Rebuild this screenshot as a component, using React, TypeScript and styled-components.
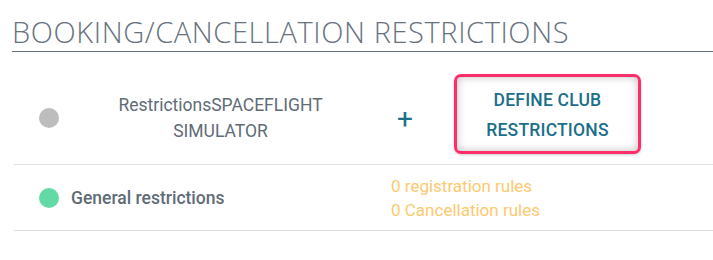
import styled, { createGlobalStyle } from 'styled-components';

const GlobalStyle = createGlobalStyle`
  body {
    margin: 0;
    background: #fff;
    font-family: Roboto, "Liberation Sans", sans-serif;
  }
`;

type Rule = {
  color: string;
  name: string;
  centered?: boolean;
  bold?: boolean;
  registration?: number;
  cancellation?: number;
  define?: boolean;
};

const rules: Rule[] = [
  { color: '#bdbdbd', name: 'RestrictionsSPACEFLIGHT SIMULATOR', centered: true, define: true },
  { color: '#63d9a6', name: 'General restrictions', bold: true, registration: 0, cancellation: 0 }
];

export default function App(): JSX.Element {
  return (
    <Page>
      <GlobalStyle />
      <Title>BOOKING/CANCELLATION RESTRICTIONS</Title>
      <Table>
        {rules.map((rule) => (
          <Row key={rule.name} tall={rule.define}>
            <Dot color={rule.color} />
            <Name centered={rule.centered} bold={rule.bold}>
              {rule.name}
            </Name>
            {rule.define ? (
              <Actions>
                <Plus>+</Plus>
                <DefineButton>DEFINE CLUB RESTRICTIONS</DefineButton>
              </Actions>
            ) : (
              <Counts>
                <span>{rule.registration} registration rules</span>
                <span>{rule.cancellation} Cancellation rules</span>
              </Counts>
            )}
          </Row>
        ))}
      </Table>
    </Page>
  );
}

const Page = styled.div`
  width: 713px;
  height: 260px;
  padding-top: 15px;
  box-sizing: border-box;
  overflow: hidden;
`;

const Title = styled.h2`
  margin: 0 0 0 12px;
  padding-bottom: 3px;
  font-family: "Open Sans", sans-serif;
  font-weight: 300;
  font-size: 29px;
  line-height: 33px;
  letter-spacing: 0.6px;
  white-space: nowrap;
  color: #67727e;
  border-bottom: 1px solid #67727e;
`;

const Table = styled.div`
  margin: 0 0 0 14px;
`;

const Row = styled.div<{ tall?: boolean }>`
  display: flex;
  align-items: center;
  box-sizing: border-box;
  height: ${(p) => (p.tall ? '113px' : '66px')};
  padding-top: ${(p) => (p.tall ? '20px' : '0')};
  border-bottom: 1px solid #dedede;
`;

const Dot = styled.span<{ color: string }>`
  flex: none;
  width: 20px;
  height: 20px;
  margin: 0 12px 0 25px;
  border-radius: 50%;
  background: ${(p) => p.color};
`;

const Name = styled.div<{ centered?: boolean; bold?: boolean }>`
  width: 299px;
  flex: none;
  text-align: ${(p) => (p.centered ? 'center' : 'left')};
  padding: ${(p) => (p.centered ? '0 30px' : '0')};
  box-sizing: border-box;
  font-size: 17.5px;
  font-weight: ${(p) => (p.bold ? 500 : 400)};
  line-height: 26px;
  color: #5f6b77;
`;

const Actions = styled.div`
  display: flex;
  align-items: center;
  margin-left: 21px;
`;

const Plus = styled.span`
  width: 28px;
  margin-right: 35px;
  text-align: center;
  font-size: 28px;
  font-weight: 400;
  color: #1c6f88;
`;

const DefineButton = styled.button`
  width: 187px;
  height: 80px;
  margin-bottom: 8px;
  padding: 2px 16px 0;
  border: 3px solid #ff2d6a;
  border-radius: 7px;
  background: #fff;
  box-shadow: inset 0 0 8px rgba(0, 0, 0, 0.25), 0 1px 3px rgba(0, 0, 0, 0.2);
  font-family: Roboto, sans-serif;
  font-size: 17.5px;
  font-weight: 500;
  line-height: 30px;
  letter-spacing: 0.2px;
  color: #1b6f8a;
  cursor: pointer;
`;

const Counts = styled.div`
  display: flex;
  flex-direction: column;
  margin-left: 21px;
  font-size: 17px;
  line-height: 24px;
  color: #fdc96f;
`;
